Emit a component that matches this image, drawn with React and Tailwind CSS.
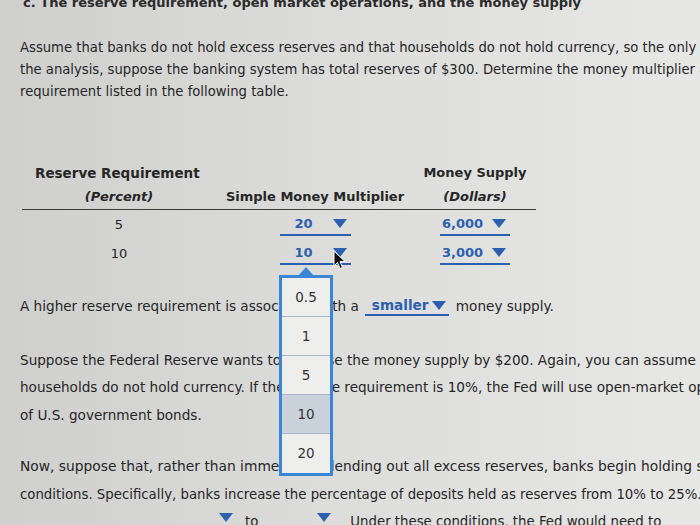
import React from "react";

function Tri({ className = "" }) {
  return (
    <svg width="14" height="9" viewBox="0 0 14 9" className={`shrink-0 ${className}`}>
      <polygon points="0,0 14,0 7,9" fill="#2c5fae" />
    </svg>
  );
}

function Drop({ value, w = "w-[71px]", pl = "pl-[15px]" }) {
  return (
    <span className={`inline-flex items-center justify-between ${w} border-b-2 border-[#2c5fae] h-[22px] ${pl} pr-[4px] text-[#2c5fae] font-bold`}>
      <span>{value}</span>
      <Tri />
    </span>
  );
}

export default function App() {
  const items = ["0.5", "1", "5", "10", "20"];
  return (
    <div className="relative w-[700px] h-[525px] overflow-hidden bg-linear-to-l from-[#e7e7e6] via-[#dddddc] to-[#cfcfce] text-[#262626] font-['DejaVu_Sans',sans-serif]">
      {/* title */}
      <div className="flex justify-end w-[581px] -mt-[7px] h-[20px] items-center text-[13px] font-bold whitespace-nowrap text-[#2a2a2a]">
        c. The reserve requirement, open market operations, and the money supply
      </div>

      {/* paragraph 1 */}
      <div className="mt-[24px] pl-[20px] text-[13.2px] leading-[22px] whitespace-nowrap">
        <div>Assume that banks do not hold excess reserves and that households do not hold currency, so the only form of money is demand deposits.</div>
        <div>the analysis, suppose the banking system has total reserves of $300. Determine the money multiplier and the money supply for each reserve</div>
        <div>requirement listed in the following table.</div>
      </div>

      {/* table */}
      <div className="mt-[58px] ml-[22px] w-[514px] text-[13px]">
        <div className="grid grid-cols-[194px_198px_122px] border-b border-[#3a3a3a] font-bold">
          <div className="h-[24px] flex items-center pl-[13px] text-[13.5px]">Reserve Requirement</div>
          <div className="h-[24px]"></div>
          <div className="h-[24px] flex items-center justify-center">Money Supply</div>
          <div className="h-[24px] flex items-center justify-center italic">(Percent)</div>
          <div className="h-[24px] flex items-center justify-center">Simple Money Multiplier</div>
          <div className="h-[24px] flex items-center justify-center italic">(Dollars)</div>
        </div>
        <div className="grid grid-cols-[194px_198px_122px]">
          <div className="h-[29px] flex items-center justify-center">5</div>
          <div className="h-[29px] flex items-center justify-center"><Drop value="20" /></div>
          <div className="h-[29px] flex items-center justify-center"><Drop value="6,000" w="w-[70px]" pl="pl-[2px]" /></div>
          <div className="h-[29px] flex items-center justify-center">10</div>
          <div className="h-[29px] flex items-center justify-center"><Drop value="10" /></div>
          <div className="h-[29px] flex items-center justify-center"><Drop value="3,000" w="w-[70px]" pl="pl-[2px]" /></div>
        </div>
      </div>

      {/* sentence with smaller */}
      <div className="mt-[24px] pl-[20px] h-[28px] flex items-center text-[13.6px] whitespace-nowrap">
        <span className="shrink-0">A higher reserve requirement is associated with a</span>
        <span className="shrink-0 inline-flex items-center justify-between w-[84px] ml-[6px] mr-[7px] border-b-2 border-[#2c5fae] h-[20px] pl-[7px] pr-[3px] text-[#2c5fae] font-bold">
          <span>smaller</span>
          <Tri />
        </span>
        <span className="shrink-0">money supply.</span>
      </div>

      {/* suppose paragraph */}
      <div className="mt-[26px] pl-[20px] text-[13.6px] whitespace-nowrap">
        <div className="h-[28px] flex items-center">Suppose the Federal Reserve wants to increase the money supply by $200. Again, you can assume that banks do not hold excess reserves and that</div>
        <div className="h-[27px] flex items-center">households do not hold currency. If the reserve requirement is 10%, the Fed will use open-market operations to buy $20 worth</div>
        <div className="h-[28px] flex items-center">of U.S. government bonds.</div>
      </div>

      {/* now paragraph */}
      <div className="mt-[23px] pl-[20px] whitespace-nowrap">
        <div className="h-[29px] flex items-center text-[13.8px]">Now, suppose that, rather than immediately lending out all excess reserves, banks begin holding some excess reserves due to uncertain economic</div>
        <div className="h-[27px] flex items-center text-[13.3px]">conditions. Specifically, banks increase the percentage of deposits held as reserves from 10% to 25%. This change will cause the</div>
        <div className="h-[28px] flex items-center text-[13.3px]">
          <span className="shrink-0 inline-flex items-start justify-end w-[80px] ml-[133px] pt-[3px] h-[24px] border-b-2 border-[#2c5fae]"><Tri /></span>
          <span className="shrink-0 ml-[12px]">to</span>
          <span className="shrink-0 inline-flex items-start justify-end w-[70px] ml-[3px] pt-[3px] h-[24px] border-b-2 border-[#2c5fae]"><Tri /></span>
          <span className="shrink-0 ml-[19px]">Under these conditions, the Fed would need to</span>
          <span className="shrink-0 inline-block w-[60px] ml-[6px] h-[14px] border-b border-[#333]"></span>
        </div>
      </div>

      {/* dropdown popup */}
      <div className="absolute left-[279px] top-[267px] w-[54px]">
        <div className="flex justify-center -mb-[1px]">
          <svg width="16" height="9" viewBox="0 0 16 9">
            <polygon points="8,0 16,9 0,9" fill="#3a86d6" />
          </svg>
        </div>
        <div className="border-[3px] border-[#3a86d6] bg-[#eeeeed] text-[13.5px] text-[#333]">
          {items.map((v, i) => (
            <div
              key={v}
              className={`h-[39px] flex items-center justify-center ${i < items.length - 1 ? "border-b border-[#a7b6c8]" : ""} ${v === "10" ? "bg-[#c9d1db]" : ""}`}
            >
              {v}
            </div>
          ))}
        </div>
      </div>

      {/* mouse cursor */}
      <svg className="absolute left-[333px] top-[250px]" width="13" height="20" viewBox="0 0 13 20">
        <path d="M1 1 L1 16 L4.5 12.5 L7 18.5 L9.5 17.5 L7 11.5 L12 11.5 Z" fill="#111" stroke="#fff" strokeWidth="1" strokeLinejoin="round" />
      </svg>
    </div>
  );
}
